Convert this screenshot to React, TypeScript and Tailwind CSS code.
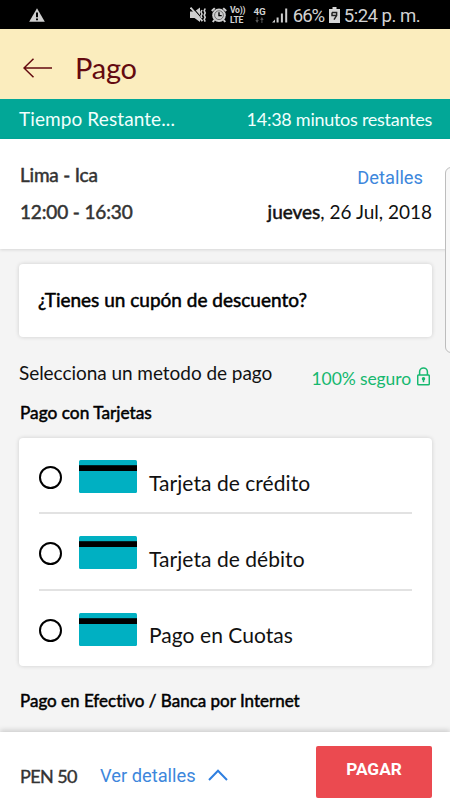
const methods = ['Tarjeta de crédito', 'Tarjeta de débito', 'Pago en Cuotas'];

function StatusBar() {
  return (
    <div className="h-[29px] shrink-0 bg-black flex items-center pl-[29px] pr-[30px] text-[#d2d2d2] font-['Roboto',sans-serif]">
      <svg width="16" height="14" viewBox="0 0 16 14" className="shrink-0">
        <path d="M8 0.3L15.8 13.8H0.2z" fill="#cfcfcf" />
        <path d="M7 4.6h2v4.6H7zM7 10.4h2v1.9H7z" fill="#000" />
      </svg>
      <svg className="ml-[145px] shrink-0" width="17" height="16" viewBox="0 0 17 16" fill="none">
        <path d="M0 4.5h4.5L10 0.5v14.5L4.5 11H0z" fill="#cfcfcf" />
        <path d="M1.6 -0.5L13 12.6" stroke="#000" strokeWidth="1.1" />
        <path d="M0.6 0.6L12.4 14.2" stroke="#cfcfcf" strokeWidth="1.8" />
        <path d="M12 3l-1 2 1 2-1 2 1 2M15.2 1.5l-1 2.2 1 2.2-1 2.2 1 2.2-1 2.2 1 2.2" stroke="#cfcfcf" strokeWidth="1.6" />
      </svg>
      <svg className="ml-1 shrink-0" width="16" height="16" viewBox="0 0 16 16" fill="none">
        <path d="M0.8 4l3-2.9M15.2 4l-3-2.9M3.3 13l-1.5 2M12.7 13l1.5 2" stroke="#cfcfcf" strokeWidth="2" />
        <circle cx="8" cy="8.2" r="6.8" fill="#cfcfcf" />
        <circle cx="8" cy="8.2" r="4.4" stroke="#555" strokeWidth="0.8" />
        <path d="M8 5.2v3.4h2.7" stroke="#000" strokeWidth="1.4" />
      </svg>
      <div className="ml-[3px] mt-px w-[16px] flex flex-col text-[8.6px] leading-[10px] font-bold tracking-[-0.3px] whitespace-nowrap">
        <span>Vo))</span>
        <span>LTE</span>
      </div>
      <div className="ml-[8px] w-[13px] flex flex-col items-center">
        <span className="text-[9.8px] leading-[10px] font-bold">4G</span>
        <svg width="9" height="6" viewBox="0 0 9 6" fill="#555">
          <path d="M1.6 0h1v3h1.2L2.1 6 0.4 3h1.2zM6.4 6h1V3h1.2L6.9 0 5.2 3h1.2z" />
        </svg>
      </div>
      <svg className="ml-[6px] shrink-0" width="16" height="16" viewBox="0 0 16 16" fill="#cfcfcf">
        <path d="M0 15.5l3-3v3zM4.6 10.5h2v5h-2zM8.9 6.5h2v9h-2zM13.2 1.5h2v14h-2z" />
      </svg>
      <span className="ml-[5px] w-[31px] text-[18.6px] leading-[20px] tracking-[-1.1px] mt-[2px]">66%</span>
      <svg className="ml-[5px] shrink-0" width="11" height="16" viewBox="0 0 11 16">
        <path d="M3.5 0h4v2H11v14H0V2h3.5z" fill="#d6d6d6" />
        <path d="M3 5.6h4.6v3L5 12.6M3 5.6v3h4.6" fill="none" stroke="#222" strokeWidth="1.5" />
      </svg>
      <span className="ml-[4px] text-[18.6px] leading-[20px] tracking-[-0.55px] mt-[2px] whitespace-nowrap">5:24 p. m.</span>
    </div>
  );
}

function CardIcon() {
  return (
    <svg width="58" height="33" viewBox="0 0 58 33">
      <rect width="58" height="33" rx="1.5" fill="#00b0c2" />
      <rect y="5.2" width="58" height="5.8" fill="#000" />
    </svg>
  );
}

export default function App() {
  return (
    <div className="w-[450px] h-[800px] overflow-hidden relative flex flex-col bg-[#f4f4f4] font-['Lato',sans-serif] text-[#111] [font-variant-ligatures:none]">
      <StatusBar />

      {/* Header */}
      <header className="h-[70px] shrink-0 bg-[#fbedbe] flex items-center pl-[23px] pt-[8px] text-[#640a10]">
        <svg width="30" height="20" viewBox="0 0 30 20" fill="none" stroke="currentColor" strokeWidth="1.5">
          <path d="M29 10H1M10.5 0.7L1 10l9.5 9.3" />
        </svg>
        <h1 className="ml-[22px] text-[29px] leading-[36px] tracking-[-0.2px]">Pago</h1>
      </header>

      {/* Countdown */}
      <div className="h-10 shrink-0 bg-[#02a797] text-[#f1fffd] flex items-center justify-between pl-[19px] pr-[18px]">
        <span className="text-[19px] leading-6 tracking-[0.1px]">Tiempo Restante...</span>
        <span className="text-[18px] leading-6 tracking-[-0.27px]">14:38 minutos restantes</span>
      </div>

      {/* Trip */}
      <section className="h-[110px] shrink-0 bg-white pl-[20px] pr-[18px] pt-[24px] shadow-[0_1px_3px_rgba(0,0,0,0.12)]">
        <div className="flex justify-between">
          <span className="text-[19px] leading-6 tracking-[-0.2px] text-[#333] [-webkit-text-stroke:0.5px]">Lima - Ica</span>
          <a className="mt-[3px] mr-[9px] text-[18.3px] leading-6 text-[#3d87dc] font-['Roboto',sans-serif]">Detalles</a>
        </div>
        <div className="flex justify-between mt-[10px]">
          <span className="text-[19px] leading-6 tracking-[-0.15px] text-[#333] [-webkit-text-stroke:0.5px]">12:00 - 16:30</span>
          <span className="text-[19px] leading-6">
            <span className="[-webkit-text-stroke:0.5px]">jueves</span>, 26 Jul, 2018
          </span>
        </div>
      </section>

      <main className="flex-1 min-h-0 pl-[19px] pr-[18px] pt-[15px]">
        <div className="h-[73px] bg-white rounded-[4px] shadow-[0_0_4px_rgba(0,0,0,0.16)] flex items-center pl-[19px]">
          <span className="text-[19px] leading-6 text-black [-webkit-text-stroke:0.5px] -mt-0.5">¿Tienes un cupón de descuento?</span>
        </div>

        <div className="flex justify-between mt-[24px] h-[30px]">
          <span className="text-[19px] leading-6 tracking-[-0.05px]">Selecciona un metodo de pago</span>
          <div className="flex text-[#16b86f] mt-[6px] mr-[2px]">
            <span className="text-[17.5px] leading-6 tracking-[-0.1px]">100% seguro</span>
            <svg className="ml-[6px] mt-0" width="13" height="19" viewBox="0 0 13 19" fill="none" stroke="currentColor" strokeWidth="1.5">
              <rect x="0.7" y="8" width="11.6" height="9.7" rx="1" />
              <path d="M2.6 8V4.8a3.9 3.9 0 0 1 7.8 0V8" />
              <path d="M6.5 12v3.2" />
              <circle cx="6.5" cy="11.8" r="1" fill="currentColor" />
            </svg>
          </div>
        </div>

        <h2 className="mt-[10px] pl-px text-[17.3px] leading-6 text-black [-webkit-text-stroke:0.5px]">Pago con Tarjetas</h2>

        <ul className="mt-[13px] h-[228px] bg-white rounded-[4px] shadow-[0_0_4px_rgba(0,0,0,0.16)] px-[20px]">
          {methods.map((method) => (
            <li key={method} className="h-[76.4px] flex border-b-2 border-[#e2e2e2] last:border-b-0">
              <span className="mt-[28px] size-[23px] shrink-0 rounded-full border-2 border-black" />
              <span className="ml-[17px] mt-[22px]">
                <CardIcon />
              </span>
              <span className="ml-[12px] mt-[32.5px] text-[21px] leading-6 tracking-[0.05px]">{method}</span>
            </li>
          ))}
        </ul>

        <h2 className="mt-[23px] pl-px text-[17px] leading-6 text-black [-webkit-text-stroke:0.5px]">Pago en Efectivo / Banca por Internet</h2>
      </main>

      {/* Bottom bar */}
      <footer className="relative h-[68px] shrink-0 bg-white flex items-start pl-[20px] pr-[18px] shadow-[0_-2px_5px_rgba(0,0,0,0.16)]">
        <span className="mt-[32px] w-[58px] whitespace-nowrap text-[18px] leading-6 tracking-[-0.6px] text-[#333] [-webkit-text-stroke:0.4px]">PEN 50</span>
        <a className="ml-[22px] mt-[32px] w-[97px] whitespace-nowrap text-[18.3px] leading-6 text-[#3d87dc] font-['Roboto',sans-serif]">Ver detalles</a>
        <svg className="ml-[11px] mt-[37px]" width="20" height="12" viewBox="0 0 20 12" fill="none" stroke="#2f7fe0" strokeWidth="2">
          <path d="M1 11l9-9.3L19 11" />
        </svg>
        <button className="ml-auto mt-[14px] w-[116px] h-[52px] pb-[5px] rounded-[2px] bg-[#eb4a50] text-white text-[17.3px] font-bold font-['Roboto',sans-serif]">
          PAGAR
        </button>
      </footer>

      {/* Edge panel handle */}
      <div className="absolute left-[445px] top-[167px] w-[12px] h-[186px] rounded-[6px] border border-[#bdbdbd] bg-[#f8f8f8]" />
    </div>
  );
}
